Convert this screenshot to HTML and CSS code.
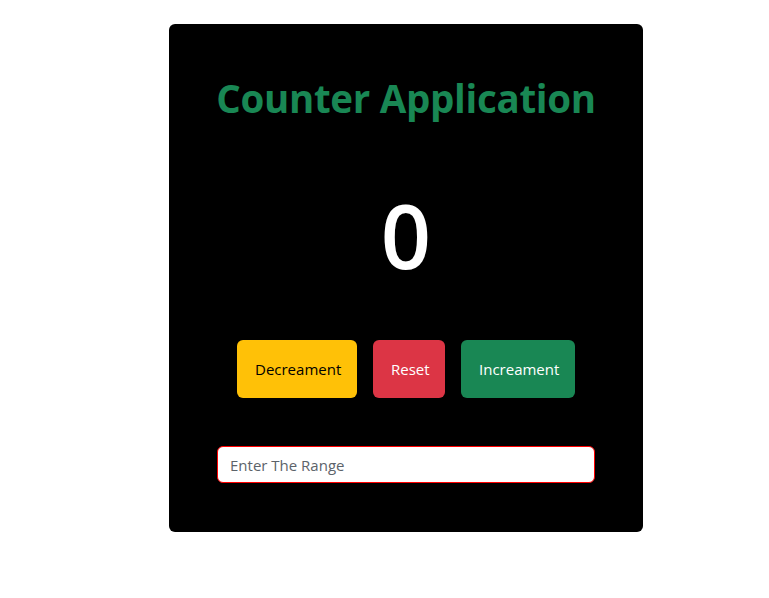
FILE: index.html
```html
<!DOCTYPE html>
<html lang="en">
<head>
<meta charset="utf-8">
<title>Counter Application</title>
<link rel="stylesheet" href="styles.css">
</head>
<body>
<div class="card">
  <h1 class="title">Counter Application</h1>
  <div class="count">0</div>
  <div class="actions">
    <button class="btn btn-warning">Decreament</button>
    <button class="btn btn-danger">Reset</button>
    <button class="btn btn-success">Increament</button>
  </div>
  <input class="range" type="text" placeholder="Enter The Range">
</div>
</body>
</html>
```

FILE: styles.css
```css
* { box-sizing: border-box; }
body {
  margin: 0;
  background: #fff;
  font-family: "Open Sans", "Noto Sans", sans-serif;
}
.card {
  width: 474px;
  height: 508px;
  margin: 24px 0 0 169px;
  background: #000;
  border-radius: 6px;
  display: flex;
  flex-direction: column;
  align-items: center;
  padding: 0 48px;
}
.title {
  margin: 49px 0 0;
  color: #198754;
  font-size: 38.5px;
  font-weight: 700;
  line-height: 50px;
  letter-spacing: -0.3px;
  white-space: nowrap;
}
.count {
  margin-top: 62px;
  color: #fff;
  font-size: 88px;
  font-weight: 600;
  line-height: 100px;
}
.actions {
  margin-top: 55px;
  display: flex;
  gap: 16px;
}
.btn {
  height: 58px;
  border: none;
  border-radius: 6px;
  font-family: inherit;
  font-size: 15px;
  padding: 0 18px;
}
.btn-warning { background: #ffc107; color: #000; width: 120px; }
.btn-danger { background: #dc3545; color: #fff; width: 72px; }
.btn-success { background: #198754; color: #fff; width: 114px; }
.range {
  margin-top: 48px;
  width: 378px;
  height: 37px;
  border: 1px solid #ff0000;
  border-radius: 6px;
  padding: 0 12px;
  font-family: inherit;
  font-size: 15px;
  color: #212529;
  background: #fff;
}
.range::placeholder { color: #5c636a; }
```
